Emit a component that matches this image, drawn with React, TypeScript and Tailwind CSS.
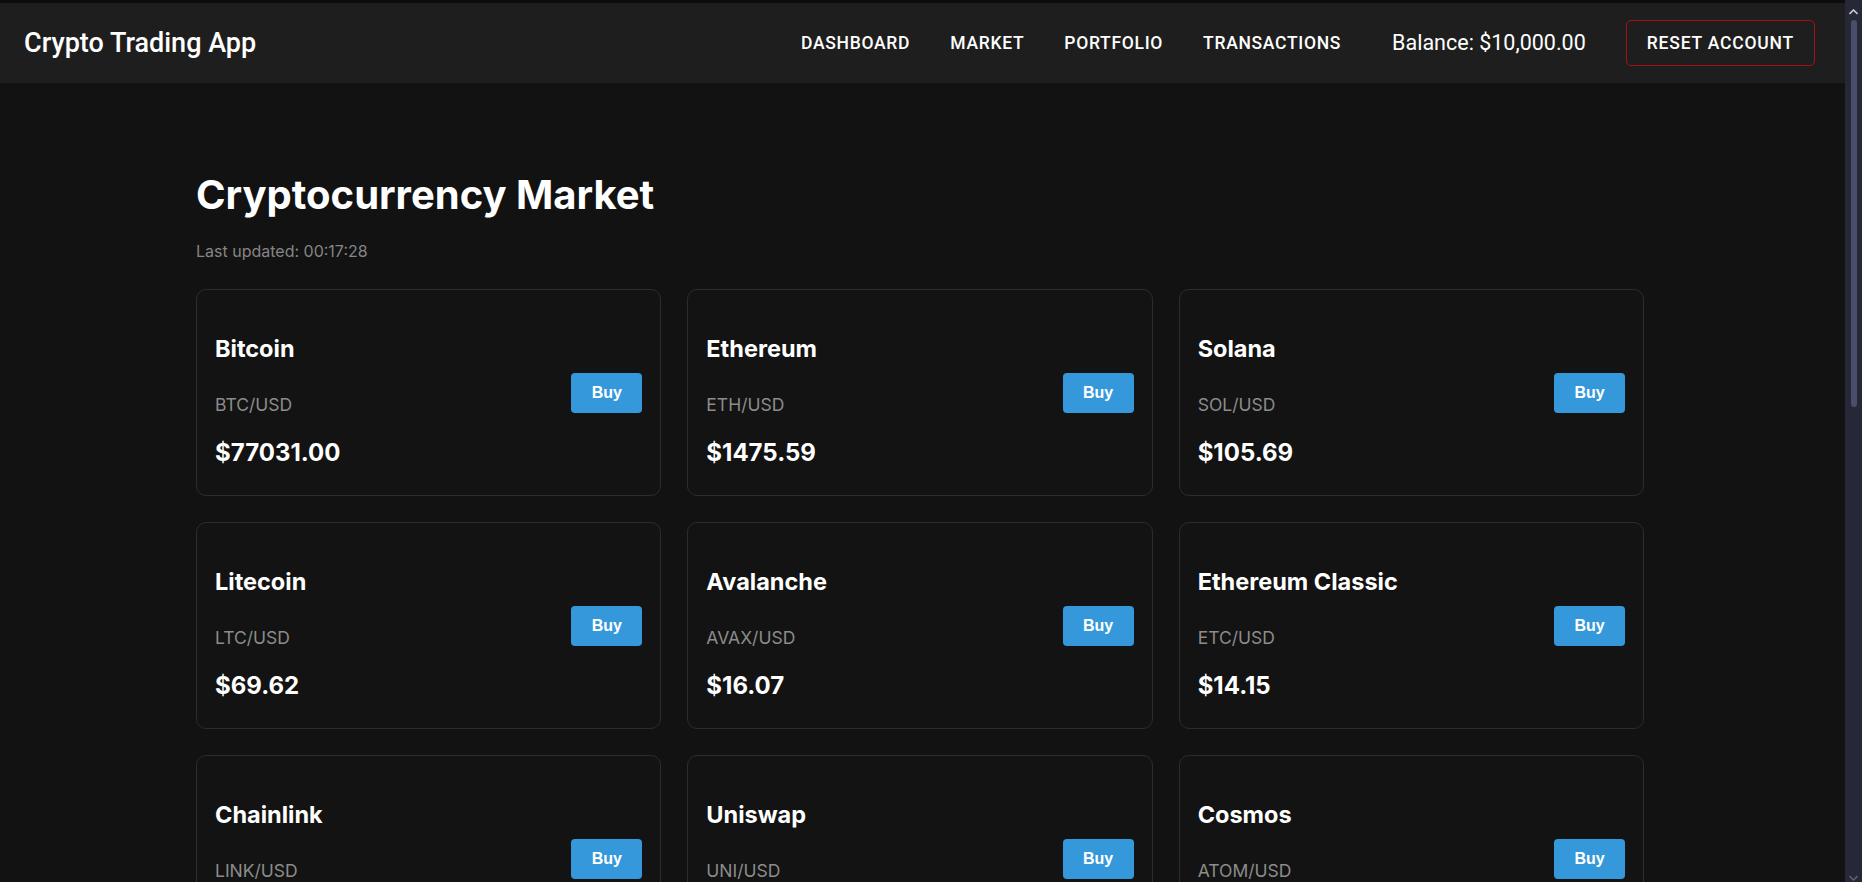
import React from "react";

const coins = [
  { name: "Bitcoin", pair: "BTC/USD", price: "$77031.00" },
  { name: "Ethereum", pair: "ETH/USD", price: "$1475.59" },
  { name: "Solana", pair: "SOL/USD", price: "$105.69" },
  { name: "Litecoin", pair: "LTC/USD", price: "$69.62" },
  { name: "Avalanche", pair: "AVAX/USD", price: "$16.07" },
  { name: "Ethereum Classic", pair: "ETC/USD", price: "$14.15" },
  { name: "Chainlink", pair: "LINK/USD", price: "$18.42" },
  { name: "Uniswap", pair: "UNI/USD", price: "$7.21" },
  { name: "Cosmos", pair: "ATOM/USD", price: "$6.35" },
];

function Card({ name, pair, price }: { name: string; pair: string; price: string }) {
  return (
    <div className="h-[207px] shrink-0 rounded-[10px] border border-[#2c2c2c] bg-[#131313] px-[18px] py-[26px] flex items-center justify-between">
      <div className="flex flex-col">
        <div className="mt-[16px] text-[23.5px] leading-[32px] font-bold text-white">{name}</div>
        <div className="mt-[28px] text-[17.5px] leading-[24px] text-[#8c8c8c]">{pair}</div>
        <div className="mt-[20px] text-[24px] leading-[32px] font-bold text-white">{price}</div>
      </div>
      <button
        className="h-[40px] w-[71px] shrink-0 rounded-[4px] bg-[#3498db] text-[16px] font-bold text-white"
        style={{ fontFamily: '"Liberation Sans", Arial, sans-serif' }}
      >
        Buy
      </button>
    </div>
  );
}

export default function App() {
  return (
    <div className="flex h-[882px] w-full overflow-hidden bg-[#121212]">
      <div className="flex min-w-0 flex-1 flex-col">
        <div className="h-[3px] shrink-0 bg-[#0c0c10]" />
        <header
          className="flex h-[80px] shrink-0 items-center justify-between bg-[#1e1e1e] pl-6 pr-[30px] text-white"
          style={{ fontFamily: 'Roboto, "Liberation Sans", sans-serif' }}
        >
          <div className="text-[27px] font-medium">Crypto Trading App</div>
          <div className="flex items-center">
            <nav className="flex items-center text-[17.5px] font-medium uppercase tracking-[0.7px]">
              <span className="px-5">Dashboard</span>
              <span className="px-5">Market</span>
              <span className="px-5">Portfolio</span>
              <span className="px-5">Transactions</span>
            </nav>
            <div className="ml-[31px] text-[21.5px]">Balance: $10,000.00</div>
            <button className="ml-[40px] h-[46px] rounded-[5px] border border-[#a81010] px-5 text-[17.5px] font-medium uppercase tracking-[0.8px] text-white">
              Reset Account
            </button>
          </div>
        </header>
        <main
          className="mx-auto w-[1453px] shrink-0 pr-[5px] pt-[88px]"
          style={{ fontFamily: 'Inter, "Noto Sans", sans-serif' }}
        >
          <h1 className="text-[40px] leading-[48px] font-bold text-white">Cryptocurrency Market</h1>
          <div className="mt-5 text-[16px] leading-[24px] text-[#858585]">Last updated: 00:17:28</div>
          <div className="mt-[26px] grid grid-cols-3 gap-[26px]">
            {coins.map((c) => (
              <Card key={c.name} {...c} />
            ))}
          </div>
        </main>
      </div>
      <div className="flex w-[17px] shrink-0 flex-col items-center bg-[#262837]">
        <svg width="9" height="6" viewBox="0 0 9 6" className="mt-[9px] shrink-0">
          <path d="M0.5 5 L4.5 1 L8.5 5" stroke="#c8c8d2" strokeWidth="1.6" fill="none" />
        </svg>
        <div className="mt-[5px] h-[387px] w-[6px] shrink-0 rounded-[3px] bg-[#4a4e68]" />
        <div className="flex-1" />
        <svg width="9" height="6" viewBox="0 0 9 6" className="mb-[1px] shrink-0">
          <path d="M0.5 1 L4.5 5 L8.5 1" stroke="#5c5e72" strokeWidth="1.6" fill="none" />
        </svg>
      </div>
    </div>
  );
}
